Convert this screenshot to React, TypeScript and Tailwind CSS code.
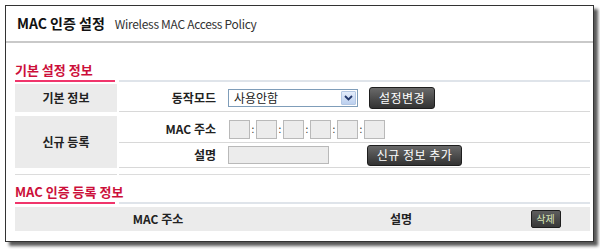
import React from 'react';

const DarkButton: React.FC<{ label: string; className?: string }> = ({ label, className = '' }) => (
  <button
    className={`flex items-center justify-center rounded-[3px] border border-[#1e1e1e] bg-gradient-to-b from-[#6a6a6a] to-[#333333] text-[12px] leading-none text-white tracking-[0.5px] ${className}`}
  >
    {label}
  </button>
);

const SectionTitle: React.FC<{ title: string }> = ({ title }) => (
  <div>
    <div className="text-[13px] font-bold leading-[16px] text-[#cc0f3a]">{title}</div>
    <div className="mt-[2px] flex items-center gap-[4px]">
      <div className="h-[2px] w-[100px] bg-[#f0356b]" />
      <div className="h-[2px] flex-1 bg-[#dfe4ea]" />
    </div>
  </div>
);

export default function App() {
  return (
    <div className="h-[249px] w-[600px] bg-white pl-[5px] pt-[5px] font-['Noto_Sans_CJK_KR','Noto_Sans',sans-serif] text-[#222]">
      <div className="flex h-[237px] w-[589px] flex-col border border-[#333] bg-white shadow-[4px_4px_3px_rgba(0,0,0,0.65)]">
        {/* Header */}
        <div className="flex h-[35px] items-center gap-[10px] pl-[11px]">
          <span className="text-[14px] font-bold text-[#111]">MAC 인증 설정</span>
          <span className="text-[12px] tracking-[-0.3px] text-[#333]">Wireless MAC Access Policy</span>
        </div>
        <div className="h-[2px] bg-[#c9c9c9]" />

        <div className="flex flex-col pl-[9px] pr-[3px]">
          <div className="mt-[19px]">
            <SectionTitle title="기본 설정 정보" />
          </div>

          {/* 기본 정보 */}
          <div className="mt-[2px] flex h-[28px] gap-[2px]">
            <div className="flex w-[102px] items-center justify-center bg-[#ebebeb] text-[12px] font-bold">기본 정보</div>
            <div className="flex flex-1 items-center border-b border-[#d8d8d8]">
              <div className="w-[99px] pr-[2px] text-right text-[12px] font-bold">동작모드</div>
              <div className="ml-[10px] flex h-[18px] w-[130px] items-center border border-[#7f9db9] bg-white">
                <span className="flex-1 pl-[5px] text-[12px] leading-none">사용안함</span>
                <div className="m-[1px] flex h-[14px] w-[15px] items-center justify-center rounded-[1px] border border-[#b3c7e3] bg-gradient-to-b from-[#e3ecfa] to-[#bcd0ef]">
                  <svg width="9" height="6" viewBox="0 0 9 6">
                    <path d="M1 1 L4.5 4.5 L8 1" fill="none" stroke="#22376b" strokeWidth="1.8" />
                  </svg>
                </div>
              </div>
              <DarkButton label="설정변경" className="ml-[11px] h-[22px] w-[66px]" />
            </div>
          </div>

          {/* 신규 등록 */}
          <div className="mt-[4px] flex gap-[2px]">
            <div className="flex h-[52px] w-[102px] items-center justify-center bg-[#ebebeb] text-[12px] font-bold">신규 등록</div>
            <div className="flex flex-1 flex-col">
              <div className="flex h-[27px] items-center border-b border-[#d8d8d8]">
                <div className="w-[99px] pr-[2px] text-right text-[12px] font-bold">MAC 주소</div>
                <div className="ml-[11px] flex items-center">
                  {[0, 1, 2, 3, 4, 5].map((i) => (
                    <React.Fragment key={i}>
                      {i > 0 && <span className="w-[6px] text-center text-[10px] leading-none text-[#333]">:</span>}
                      <div className="h-[19px] w-[21px] border border-[#b9b9b9] bg-[#ececec]" />
                    </React.Fragment>
                  ))}
                </div>
              </div>
              <div className="flex h-[25px] items-center border-b border-[#d8d8d8]">
                <div className="w-[99px] pr-[2px] text-right text-[12px] font-bold">설명</div>
                <div className="ml-[10px] h-[18px] w-[101px] border border-[#b9b9b9] bg-[#ececec]" />
                <DarkButton label="신규 정보 추가" className="ml-[38px] h-[21px] w-[95px]" />
              </div>
            </div>
          </div>
          <div className="mt-[6px] flex gap-[2px]">
            <div className="h-[1px] w-[102px] bg-[#dcdcdc]" />
            <div className="h-[1px] flex-1 bg-[#dcdcdc]" />
          </div>

          <div className="mt-[9px]">
            <SectionTitle title="MAC 인증 등록 정보" />
          </div>

          {/* 목록 헤더 */}
          <div className="mt-[3px] flex h-[24px] items-center bg-[#ebebeb] text-[12px] font-bold">
            <div className="w-[286px] text-center">MAC 주소</div>
            <div className="w-[200px] text-center">설명</div>
            <div className="flex flex-1 justify-center">
              <button className="flex h-[18px] w-[30px] items-center justify-center rounded-[2px] border border-[#1e1e1e] bg-gradient-to-b from-[#5e5e5e] to-[#383838] text-[10px] font-normal leading-none text-[#d9e6b8]">
                삭제
              </button>
            </div>
          </div>
        </div>
      </div>
    </div>
  );
}
